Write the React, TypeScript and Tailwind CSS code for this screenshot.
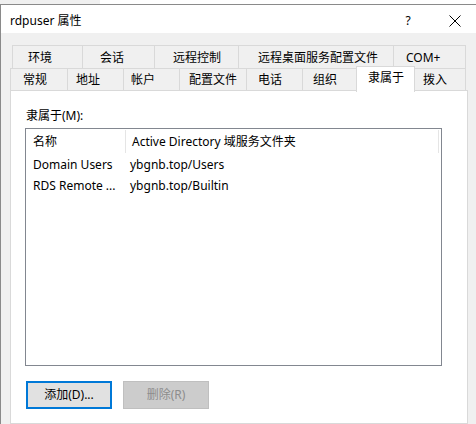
import React from "react";

const row1 = [
  { t: "环境", w: 70, pl: 15 },
  { t: "会话", w: 72, pl: 17 },
  { t: "远程控制", w: 84, pl: 18 },
  { t: "远程桌面服务配置文件", w: 155, pl: 19 },
  { t: "COM+", w: 73, pl: 12 },
];

const row2 = [
  { t: "常规", w: 57, pl: 12 },
  { t: "地址", w: 56, pl: 8 },
  { t: "帐户", w: 56, pl: 7 },
  { t: "配置文件", w: 67, pl: 9 },
  { t: "电话", w: 56, pl: 11 },
  { t: "组织", w: 55, pl: 10 },
  { t: "隶属于", w: 57, pl: 10, sel: true },
  { t: "拨入", w: 52, pl: 8 },
];

export default function App() {
  return (
    <div className="w-[476px] h-[424px] overflow-hidden bg-white text-black text-[12px] font-[family-name:'Noto_Sans','Noto_Sans_CJK_SC',sans-serif]">
      <div className="flex h-[4px]">
        <div className="w-[100px] bg-[#f0f0f0]" />
        <div className="flex-1 bg-white" />
      </div>
      <div className="border-l border-t border-[#8a8a8a] h-[420px] flex flex-col">
        {/* title bar */}
        <div className="h-[28px] bg-white flex items-center pt-[4px] shrink-0">
          <span className="ml-[9px] leading-[16px]">rdpuser 属性</span>
          <span className="ml-auto mr-[0px] w-[12px] text-center leading-[16px] text-[12px]">?</span>
          <div className="ml-[35px] mr-[15px] flex items-center">
            <svg width="12" height="12" viewBox="0 0 12 12">
              <path d="M0.5 0.5 L11.5 11.5 M11.5 0.5 L0.5 11.5" stroke="#000" strokeWidth="1" fill="none" />
            </svg>
          </div>
        </div>
        {/* body */}
        <div className="flex-1 bg-[#f0f0f0] flex flex-col pt-[12px]">
          <div className="flex ml-[11px] h-[23px]">
            {row1.map((r, i) => (
              <div
                key={r.t}
                style={{ width: r.w, paddingLeft: r.pl }}
                className={`flex items-center border-t border-l border-[#d9d9d9] leading-[16px] pt-[1px] ${i === row1.length - 1 ? "border-r" : ""}`}
              >
                {r.t}
              </div>
            ))}
          </div>
          <div className="flex ml-[9px] h-[22px] border-t border-[#d9d9d9] w-[456px]">
            {row2.map((r, i) =>
              r.sel ? (
                <div
                  key={r.t}
                  style={{ width: r.w + 2, paddingLeft: r.pl + 1 }}
                  className="relative z-10 -ml-[1px] -mt-[3px] h-[26px] bg-white border-t border-l border-r border-[#d9d9d9] flex items-center leading-[16px] pb-[3px]"
                >
                  {r.t}
                </div>
              ) : (
                <div
                  key={r.t}
                  style={{ width: i === 7 ? r.w - 1 : r.w, paddingLeft: r.pl }}
                  className={`flex items-center leading-[16px] ${i === 7 ? "border-r" : ""} ${i !== 0 && i !== 7 ? "border-l" : ""} ${i === 0 ? "border-l" : ""} border-[#d9d9d9]`}
                >
                  {r.t}
                </div>
              )
            )}
          </div>
          <div className="ml-[9px] w-[458px] flex-1 bg-white border border-[#d9d9d9] flex flex-col">
            <div className="pl-[15px] pt-[17px] leading-[16px] h-[37px]">隶属于(M):</div>
            <div className="ml-[14px] w-[417px] h-[238px] border border-[#828790] bg-white flex flex-col shrink-0">
              <div className="flex h-[25px] items-stretch">
                <div className="w-[100px] pl-[7px] flex items-center leading-[16px] pt-[1px] border-r border-[#e5e5e5] my-[1px]">名称</div>
                <div className="w-[313px] pl-[6px] flex items-center leading-[16px] pt-[1px] border-r border-[#e5e5e5] my-[1px]">Active Directory 域服务文件夹</div>
              </div>
              <div className="flex h-[21px] items-center leading-[16px]">
                <div className="w-[101px] pl-[7px]">Domain Users</div>
                <div className="pl-[3px]">ybgnb.top/Users</div>
              </div>
              <div className="flex h-[21px] items-center leading-[16px]">
                <div className="w-[101px] pl-[7px]">RDS Remote ...</div>
                <div className="pl-[3px]">ybgnb.top/Builtin</div>
              </div>
            </div>
            <div className="flex ml-[15px] mt-[15px] gap-[11px]">
              <button className="w-[86px] h-[28px] bg-[#e1e1e1] border-2 border-[#0078d7] flex items-center justify-center leading-[16px]">
                添加(D)...
              </button>
              <button disabled className="w-[86px] h-[28px] bg-[#cccccc] border border-[#bfbfbf] text-[#8d8d8d] flex items-center justify-center leading-[16px]">
                删除(R)
              </button>
            </div>
          </div>
        </div>
      </div>
    </div>
  );
}
